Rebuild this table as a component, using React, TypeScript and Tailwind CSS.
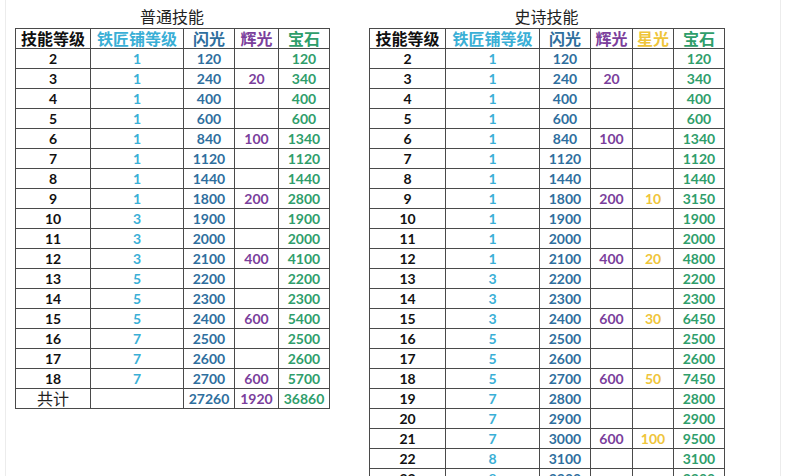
type Row = [string, string, string, string, string, string?];

const normal: Row[] = [
  ['2', '1', '120', '', '120'],
  ['3', '1', '240', '20', '340'],
  ['4', '1', '400', '', '400'],
  ['5', '1', '600', '', '600'],
  ['6', '1', '840', '100', '1340'],
  ['7', '1', '1120', '', '1120'],
  ['8', '1', '1440', '', '1440'],
  ['9', '1', '1800', '200', '2800'],
  ['10', '3', '1900', '', '1900'],
  ['11', '3', '2000', '', '2000'],
  ['12', '3', '2100', '400', '4100'],
  ['13', '5', '2200', '', '2200'],
  ['14', '5', '2300', '', '2300'],
  ['15', '5', '2400', '600', '5400'],
  ['16', '7', '2500', '', '2500'],
  ['17', '7', '2600', '', '2600'],
  ['18', '7', '2700', '600', '5700'],
];

// level, smithy, flash, glow, star, gem
const epic: string[][] = [
  ['2', '1', '120', '', '', '120'],
  ['3', '1', '240', '20', '', '340'],
  ['4', '1', '400', '', '', '400'],
  ['5', '1', '600', '', '', '600'],
  ['6', '1', '840', '100', '', '1340'],
  ['7', '1', '1120', '', '', '1120'],
  ['8', '1', '1440', '', '', '1440'],
  ['9', '1', '1800', '200', '10', '3150'],
  ['10', '1', '1900', '', '', '1900'],
  ['11', '1', '2000', '', '', '2000'],
  ['12', '1', '2100', '400', '20', '4800'],
  ['13', '3', '2200', '', '', '2200'],
  ['14', '3', '2300', '', '', '2300'],
  ['15', '3', '2400', '600', '30', '6450'],
  ['16', '5', '2500', '', '', '2500'],
  ['17', '5', '2600', '', '', '2600'],
  ['18', '5', '2700', '600', '50', '7450'],
  ['19', '7', '2800', '', '', '2800'],
  ['20', '7', '2900', '', '', '2900'],
  ['21', '7', '3000', '600', '100', '9500'],
  ['22', '8', '3100', '', '', '3100'],
  ['23', '8', '3200', '', '', '3200'],
];

const td = 'border border-[#4a4a4a] h-[20px] p-0 text-center leading-[18px]';
const cLevel = 'text-[#111111]';
const cSmithy = 'text-[#3aafd6]';
const cFlash = 'text-[#2f6f9e]';
const cGlow = 'text-[#7b3f9c]';
const cStar = 'text-[#efc53a]';
const cGem = 'text-[#2f9e6b]';

export default function App() {
  return (
    <div
      className="w-[786px] h-[476px] overflow-hidden bg-white px-[5px]"
      style={{ fontFamily: 'Lato, "Noto Sans CJK SC", sans-serif' }}
    >
      <div className="h-full border-x border-[#ececec] pl-[9px] flex gap-[40px] items-start">
        {/* 普通技能 */}
        <div className="w-[314px]">
          <div className="text-center text-[16px] leading-[20px] pt-[7px] h-[28px] text-[#222]">普通技能</div>
          <table className="table-fixed border-collapse w-[314px] text-[14px] font-bold">
            <colgroup>
              <col className="w-[75px]" />
              <col className="w-[93px]" />
              <col className="w-[51px]" />
              <col className="w-[44px]" />
              <col className="w-[51px]" />
            </colgroup>
            <thead>
              <tr className="text-[16px]">
                <th className={`${td} ${cLevel}`}>技能等级</th>
                <th className={`${td} ${cSmithy}`}>铁匠铺等级</th>
                <th className={`${td} ${cFlash}`}>闪光</th>
                <th className={`${td} ${cGlow}`}>辉光</th>
                <th className={`${td} ${cGem}`}>宝石</th>
              </tr>
            </thead>
            <tbody>
              {normal.map((r) => (
                <tr key={r[0]}>
                  <td className={`${td} ${cLevel}`}>{r[0]}</td>
                  <td className={`${td} ${cSmithy}`}>{r[1]}</td>
                  <td className={`${td} ${cFlash}`}>{r[2]}</td>
                  <td className={`${td} ${cGlow}`}>{r[3]}</td>
                  <td className={`${td} ${cGem}`}>{r[4]}</td>
                </tr>
              ))}
              <tr>
                <td className={`${td} text-[16px] font-normal text-[#222]`}>共计</td>
                <td className={td}></td>
                <td className={`${td} ${cFlash}`}>27260</td>
                <td className={`${td} ${cGlow}`}>1920</td>
                <td className={`${td} ${cGem}`}>36860</td>
              </tr>
            </tbody>
          </table>
        </div>

        {/* 史诗技能 */}
        <div className="w-[355px]">
          <div className="text-center text-[16px] leading-[20px] pt-[7px] h-[28px] text-[#222]">史诗技能</div>
          <table className="table-fixed border-collapse w-[355px] text-[14px] font-bold">
            <colgroup>
              <col className="w-[76px]" />
              <col className="w-[94px]" />
              <col className="w-[51px]" />
              <col className="w-[42px]" />
              <col className="w-[41px]" />
              <col className="w-[51px]" />
            </colgroup>
            <thead>
              <tr className="text-[16px]">
                <th className={`${td} ${cLevel}`}>技能等级</th>
                <th className={`${td} ${cSmithy}`}>铁匠铺等级</th>
                <th className={`${td} ${cFlash}`}>闪光</th>
                <th className={`${td} ${cGlow}`}>辉光</th>
                <th className={`${td} ${cStar}`}>星光</th>
                <th className={`${td} ${cGem}`}>宝石</th>
              </tr>
            </thead>
            <tbody>
              {epic.map((r) => (
                <tr key={r[0]}>
                  <td className={`${td} ${cLevel}`}>{r[0]}</td>
                  <td className={`${td} ${cSmithy}`}>{r[1]}</td>
                  <td className={`${td} ${cFlash}`}>{r[2]}</td>
                  <td className={`${td} ${cGlow}`}>{r[3]}</td>
                  <td className={`${td} ${cStar}`}>{r[4]}</td>
                  <td className={`${td} ${cGem}`}>{r[5]}</td>
                </tr>
              ))}
            </tbody>
          </table>
        </div>
      </div>
    </div>
  );
}
